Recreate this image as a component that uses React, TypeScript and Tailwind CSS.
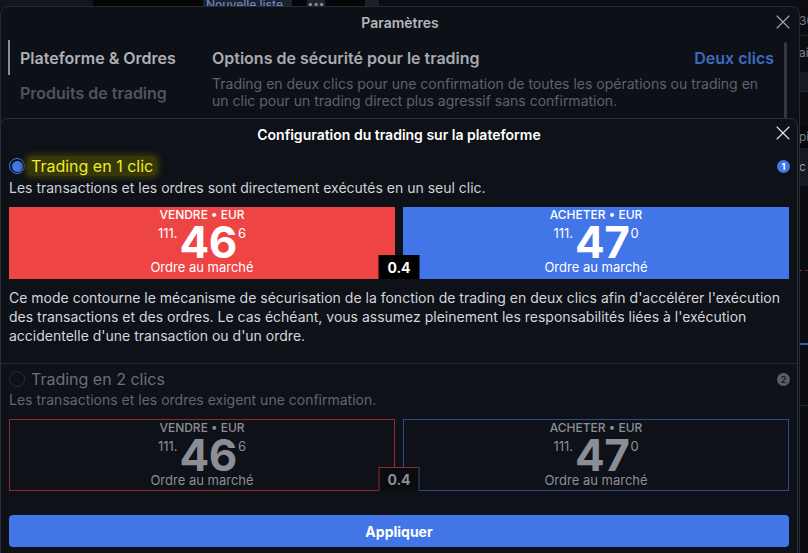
import { X } from 'lucide-react';

type Side = 'sell' | 'buy';

function PriceBox({ side, active }: { side: Side; active: boolean }) {
  const sell = side === 'sell';
  const tone = active
    ? sell
      ? 'bg-[#ef4444] text-white'
      : 'bg-[#4275e8] text-white'
    : sell
      ? 'border border-[#8c2b30] text-[#8b8e94]'
      : 'border border-[#2c4d85] text-[#8b8e94]';
  return (
    <div className={`flex-1 h-[72px] flex flex-col items-center ${tone}`}>
      <div className="text-[12px] leading-[14px] font-medium mt-[1px]">
        {sell ? 'VENDRE' : 'ACHETER'} • EUR
      </div>
      <div className="flex items-start h-[38px]">
        <span className="text-[13px] leading-[14px] mt-[4px] mr-[2px]">111.</span>
        <span className="text-[44px] font-bold leading-[40px] tracking-[-0.5px]">
          {sell ? '46' : '47'}
        </span>
        <span className="text-[13px] leading-[14px] mt-[4px] ml-[1px]">{sell ? '6' : '0'}</span>
      </div>
      <div className="text-[13px] leading-[15px]">Ordre au marché</div>
    </div>
  );
}

function PriceRow({ active }: { active: boolean }) {
  return (
    <div className="relative flex gap-2">
      <PriceBox side="sell" active={active} />
      <PriceBox side="buy" active={active} />
      <div
        className={`absolute left-1/2 -translate-x-1/2 bottom-0 w-[41px] h-[24px] flex items-center justify-center text-[14px] font-bold ${
          active
            ? 'bg-black text-white'
            : 'bg-[#0a0c10] text-[#8b8e94] border-t border-l border-t-[#8c2b30] border-l-[#8c2b30] border-r border-r-[#2c4d85]'
        }`}
      >
        0.4
      </div>
    </div>
  );
}

function Radio({ checked }: { checked: boolean }) {
  return checked ? (
    <span className="w-4 h-4 rounded-full border-[1.5px] border-[#4275e8] p-[1.5px] flex">
      <span className="flex-1 rounded-full bg-[#4275e8]" />
    </span>
  ) : (
    <span className="w-4 h-4 rounded-full border-[1.5px] border-[#2a2d34]" />
  );
}

function Badge({ n, active }: { n: number; active: boolean }) {
  return (
    <span
      className={`w-[13px] h-[13px] rounded-full flex items-center justify-center text-[9px] font-bold leading-none ${
        active ? 'bg-[#4275e8] text-white' : 'bg-[#5b5e65] text-[#1b1d22]'
      }`}
    >
      {n}
    </span>
  );
}

export default function App() {
  return (
    <div className="relative w-[808px] h-[553px] overflow-hidden bg-[#0a0c11] font-['Inter',sans-serif]">
      {/* app behind the dialogs */}
      <div className="flex h-[8px]">
        <div className="w-[93px] bg-[#12151c]" />
        <div className="w-[110px] bg-[#040507]" />
        <div className="w-[89px] bg-[#1a2130] text-[12px] leading-[10px] text-[#6f86b5] font-medium pl-[3px] overflow-hidden">
          Nouvelle liste
        </div>
        <div className="w-[15px] bg-[#040507]" />
        <div className="w-[18px] bg-[#1e2430] text-[10px] leading-[6px] text-[#8a90a0] text-center">•••</div>
        <div className="w-[40px] bg-[#040507]" />
        <div className="w-[14px] bg-[#1d2029] border-b-2 border-[#a07a2a]" />
        <div className="flex-1 bg-[#0b0d12]" />
      </div>
      <div className="absolute right-0 top-0 w-[9px] h-full flex flex-col text-[12px] text-[#7b7f87] overflow-hidden">
        <div className="h-[36px] pt-[14px] leading-[14px] border-b border-[#1f232b]">30</div>
        <div className="h-[36px] pt-[10px] leading-[14px]">ai</div>
        <div className="h-[20px] bg-[#151922] border-b border-[#1f232b]" />
        <div className="h-[34px]" />
        <div className="h-[22px] bg-[#05070a] leading-[22px]">pi</div>
        <div className="h-[38px] bg-[#151922] leading-[38px] text-[#9aa0aa]">c</div>
        <div className="h-[85px] border-b border-dashed border-[#6b2a2e]" />
        <div className="h-[72px]" />
        <div className="h-[2px] bg-[#3559a8]" />
        <div className="flex-1 border-t border-[#1f232b] mt-[60px]" />
      </div>

      {/* Paramètres dialog */}
      <div className="absolute left-0 top-[6px] w-[800px] h-[600px] rounded-lg border border-[#262a33] bg-[#0d1016]">
        <div className="relative h-[31px] flex items-center justify-center">
          <span className="text-[14px] font-semibold text-[#b4b7bc]">Paramètres</span>
          <X className="absolute right-[4px] top-[3px] w-6 h-6 text-[#a4a7ad]" strokeWidth={1.1} />
        </div>
        <div className="flex">
          <div className="w-[211px] pl-[7px] pt-[2px]">
            <div className="flex h-[35px] items-center border-l-2 border-[#8a8d93] pl-[10px] text-[16px] font-semibold text-[#aeb1b7]">
              Plateforme &amp; Ordres
            </div>
            <div className="flex h-[35px] items-center pl-[12px] text-[16px] font-semibold text-[#50545c]">
              Produits de trading
            </div>
          </div>
          <div className="w-[562px] pt-[10px]">
            <div className="flex justify-between items-center h-[20px]">
              <span className="text-[16px] font-semibold text-[#a8abb0]">Options de sécurité pour le trading</span>
              <span className="text-[16px] font-semibold text-[#3d6bc4]">Deux clics</span>
            </div>
            <p className="mt-[7px] text-[14px] leading-[17px] text-[#5d626b]">
              Trading en deux clics pour une confirmation de toutes les opérations ou trading en un clic pour un
              trading direct plus agressif sans confirmation.
            </p>
          </div>
          <div className="ml-[10px] mt-[4px] w-[3px] h-[76px] rounded-full bg-[#343842]" />
        </div>
      </div>

      {/* Configuration dialog */}
      <div className="absolute left-0 top-[118px] w-[798px] h-[450px] rounded-t-lg border border-[#2a2e37] bg-[#0e1118]">
        <div className="relative h-[30px] flex items-center justify-center">
          <span className="text-[14px] font-semibold text-white">Configuration du trading sur la plateforme</span>
          <X className="absolute right-[2px] top-[2px] w-6 h-6 text-[#e6e7ea]" strokeWidth={1.1} />
        </div>

        <div className="px-2">
          <div className="mt-[7px] h-[20px] flex items-center justify-between">
            <div className="flex items-center gap-[2px]">
              <Radio checked />
              <span className="px-1 rounded-md bg-[#37370a] shadow-[0_0_5px_3px_#2f2f0a] text-[16px] leading-[20px] text-[#eeee1c]">
                Trading en 1 clic
              </span>
            </div>
            <div className="mr-[-1px]">
              <Badge n={1} active />
            </div>
          </div>
          <p className="mt-[3px] text-[14px] leading-[18px] text-[#cfd2d6]">
            Les transactions et les ordres sont directement exécutés en un seul clic.
          </p>
          <div className="mt-[10px]">
            <PriceRow active />
          </div>
          <p className="mt-[9px] text-[14px] leading-[19px] text-[#d4d6da]">
            Ce mode contourne le mécanisme de sécurisation de la fonction de trading en deux clics afin d'accélérer
            l'exécution des transactions et des ordres. Le cas échéant, vous assumez pleinement les responsabilités
            liées à l'exécution accidentelle d'une transaction ou d'un ordre.
          </p>
        </div>

        <div className="mt-[18px] h-px bg-[#1d2838]" />

        <div className="px-2">
          <div className="mt-[5px] h-[20px] flex items-center justify-between">
            <div className="flex items-center gap-[6px]">
              <Radio checked={false} />
              <span className="text-[16px] leading-[20px] text-[#6c6f76]">Trading en 2 clics</span>
            </div>
            <div className="mr-[-1px]">
              <Badge n={2} active={false} />
            </div>
          </div>
          <p className="mt-[2px] text-[14px] leading-[18px] text-[#62666d]">
            Les transactions et les ordres exigent une confirmation.
          </p>
          <div className="mt-[10px]">
            <PriceRow active={false} />
          </div>
          <button className="mt-[24px] w-full h-[32px] rounded bg-[#4275e8] text-white text-[14px] font-bold">
            Appliquer
          </button>
        </div>
      </div>
    </div>
  );
}
